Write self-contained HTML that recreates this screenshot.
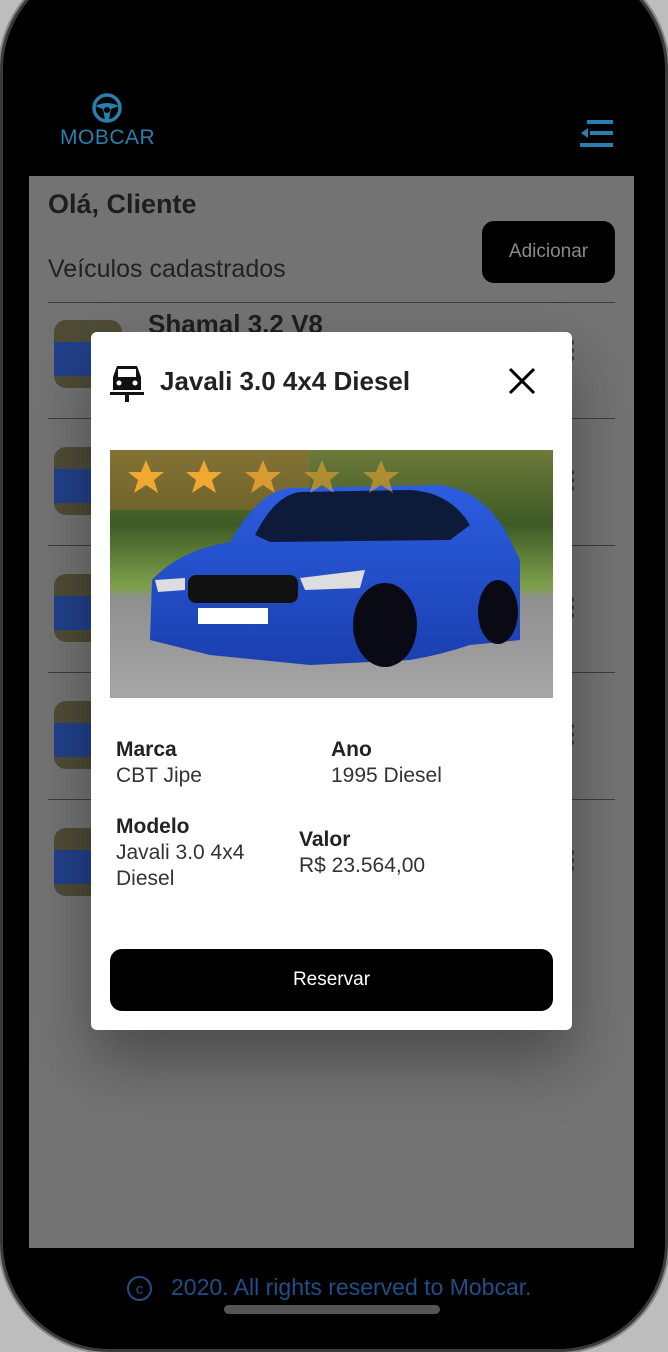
<!DOCTYPE html>
<html><head><meta charset="utf-8"><style>
*{margin:0;padding:0;box-sizing:border-box}
body{width:668px;height:1352px;background:#bdbdbd;position:relative;overflow:hidden;font-family:"Liberation Sans",sans-serif}
.phone{position:absolute;left:0;top:-40px;width:668px;height:1392px;background:#000;border-radius:110px;border:3px solid #3a3a3a;box-shadow:0 0 0 2px #888}
.screen{position:absolute;left:29px;top:176px;width:605px;height:1072px;background:#737373}
.abs{position:absolute;white-space:nowrap}
.thumb{position:absolute;left:54px;width:68px;height:68px;border-radius:12px;overflow:hidden;background:#4e4c36}
.thumb b{position:absolute;left:0;top:22px;width:68px;height:34px;background:#22408a}
.div{position:absolute;left:48px;width:567px;height:1px;background:#3c3c3c}
.dots{position:absolute;left:569px;width:6px}
.dots i{display:block;width:5px;height:5px;border-radius:50%;background:#3a3a3a;margin-bottom:3px}
.lbl{position:absolute;font-weight:bold;font-size:21px;color:#222}
.val{position:absolute;font-size:21px;color:#333;line-height:26px}
</style></head><body>
<div class="phone"></div>
<div class="abs" style="left:0;top:0;width:668px;height:1352px">
<svg class="abs" style="left:91px;top:92px" width="32" height="32" viewBox="0 0 32 32"><circle cx="16" cy="16" r="13" fill="none" stroke="#2a7fb0" stroke-width="3.5"/><path d="M4 14 Q16 8 28 14 L20 17 L18 28 L14 28 L12 17Z" fill="#2a7fb0"/><circle cx="16" cy="18" r="3" fill="#000"/></svg>
<div class="abs" style="left:60px;top:126px;font-size:21px;color:#2a7fb0;letter-spacing:0.5px">MOBCAR</div>
<svg class="abs" style="left:580px;top:119px" width="34" height="30"><rect x="7" y="1" width="26" height="4" fill="#2a7fb0"/><rect x="10" y="12" width="23" height="4" fill="#2a7fb0"/><rect x="0" y="24" width="33" height="4" fill="#2a7fb0"/><path d="M1 14 L8 9 L8 19Z" fill="#2a7fb0"/></svg>
<div class="screen"></div>
<div class="abs" style="left:48px;top:189px;font-size:27px;font-weight:bold;color:#1e1e1e">Olá, Cliente</div>
<div class="abs" style="left:48px;top:255px;font-size:25px;color:#222">Veículos cadastrados</div>
<div class="abs" style="left:482px;top:221px;width:133px;height:62px;background:#000;border-radius:12px;color:#8a8a8a;font-size:19px;text-align:center;line-height:62px">Adicionar</div>
<div class="div" style="top:302px"></div><div class="div" style="top:418px"></div><div class="div" style="top:545px"></div><div class="div" style="top:672px"></div><div class="div" style="top:799px"></div>
<div class="abs" style="left:148px;top:309px;font-size:26px;font-weight:bold;color:#1e1e1e">Shamal 3.2 V8</div>
<div class="thumb" style="top:320px"><b></b></div>
<div class="thumb" style="top:447px"><b></b></div>
<div class="thumb" style="top:574px"><b></b></div>
<div class="thumb" style="top:701px"><b></b></div>
<div class="thumb" style="top:828px"><b></b></div>
<div class="dots" style="top:340px"><i></i><i></i><i></i></div>
<div class="dots" style="top:470px"><i></i><i></i><i></i></div>
<div class="dots" style="top:597px"><i></i><i></i><i></i></div>
<div class="dots" style="top:724px"><i></i><i></i><i></i></div>
<div class="dots" style="top:850px"><i></i><i></i><i></i></div>
<div class="abs" style="left:91px;top:332px;width:481px;height:698px;background:#fff;border-radius:6px;box-shadow:0 30px 60px rgba(0,0,0,0.35)"></div>
<svg class="abs" style="left:110px;top:364px" width="34" height="38" viewBox="0 0 34 38"><path d="M7 2 H27 L31 13 V26 H3 V13Z" fill="#111"/><rect x="8" y="5" width="18" height="8" fill="#fff"/><circle cx="9" cy="19" r="2.5" fill="#fff"/><circle cx="25" cy="19" r="2.5" fill="#fff"/><rect x="0" y="28" width="34" height="3" fill="#111"/><rect x="15" y="31" width="4" height="7" fill="#111"/></svg>
<div class="abs" style="left:160px;top:366px;font-size:26px;font-weight:bold;color:#222">Javali 3.0 4x4 Diesel</div>
<svg class="abs" style="left:508px;top:367px" width="28" height="28"><path d="M2 2 L26 26 M26 2 L2 26" stroke="#000" stroke-width="3"/></svg>
<svg class="abs" style="left:110px;top:450px" width="443" height="248" viewBox="0 0 443 248">
<defs><linearGradient id="bg" x1="0" y1="0" x2="0" y2="1"><stop offset="0" stop-color="#6d7a3a"/><stop offset="0.3" stop-color="#3e5a26"/><stop offset="0.55" stop-color="#7ea04a"/><stop offset="0.6" stop-color="#8f8f8f"/><stop offset="1" stop-color="#a6a6a6"/></linearGradient>
<linearGradient id="car" x1="0" y1="0" x2="0" y2="1"><stop offset="0" stop-color="#2c5ee0"/><stop offset="1" stop-color="#1a3fb0"/></linearGradient></defs>
<rect width="443" height="248" fill="url(#bg)"/>
<rect x="0" y="0" width="200" height="60" fill="#9a6a30" opacity="0.5"/>
<path d="M40 190 L42 130 Q70 100 120 92 Q150 40 180 38 L330 35 Q370 40 395 80 L410 110 L410 190 L360 195 Q330 205 300 210 L200 215 L100 205Z" fill="url(#car)"/>
<path d="M145 85 Q165 45 190 42 L300 40 Q340 42 360 75 L340 90 L160 92Z" fill="#0d1a3a"/>
<rect x="78" y="125" width="110" height="28" rx="8" fill="#111"/>
<rect x="88" y="158" width="70" height="16" fill="#fff"/>
<ellipse cx="275" cy="175" rx="32" ry="42" fill="#0a0a14"/>
<ellipse cx="388" cy="162" rx="20" ry="32" fill="#0a0a14"/>
<path d="M45 130 L75 128 L75 140 L48 142Z" fill="#ddd"/><path d="M190 128 L255 120 L250 138 L195 140Z" fill="#ddd"/>
<g fill="#f0a830"><path d="M36 10 L41 22 L54 22 L44 30 L48 43 L36 35 L24 43 L28 30 L18 22 L31 22Z"/><path d="M94 10 L99 22 L112 22 L102 30 L106 43 L94 35 L82 43 L86 30 L76 22 L89 22Z"/><path d="M153 10 L158 22 L171 22 L161 30 L165 43 L153 35 L141 43 L145 30 L135 22 L148 22Z" opacity="0.8"/><path d="M212 10 L217 22 L230 22 L220 30 L224 43 L212 35 L200 43 L204 30 L194 22 L207 22Z" opacity="0.55"/><path d="M271 10 L276 22 L289 22 L279 30 L283 43 L271 35 L259 43 L263 30 L253 22 L266 22Z" opacity="0.55"/></g>
</svg>
<div class="lbl" style="left:116px;top:738px">Marca</div><div class="val" style="left:116px;top:763px">CBT Jipe</div>
<div class="lbl" style="left:331px;top:738px">Ano</div><div class="val" style="left:331px;top:763px">1995 Diesel</div>
<div class="lbl" style="left:116px;top:815px">Modelo</div><div class="val" style="left:116px;top:840px">Javali 3.0 4x4<br>Diesel</div>
<div class="lbl" style="left:299px;top:828px">Valor</div><div class="val" style="left:299px;top:853px">R$ 23.564,00</div>
<div class="abs" style="left:110px;top:949px;width:443px;height:62px;background:#000;border-radius:12px;color:#fff;font-size:19px;text-align:center;line-height:62px">Reservar</div>
<svg class="abs" style="left:126px;top:1275px" width="27" height="27"><circle cx="13.5" cy="13.5" r="11.5" fill="none" stroke="#1f4f86" stroke-width="2"/><text x="13.5" y="19" font-size="15" text-anchor="middle" fill="#1f4f86" font-family="Liberation Sans">c</text></svg>
<div class="abs" style="left:171px;top:1274px;font-size:23px;color:#1f4f86">2020. All rights reserved to Mobcar.</div>
<div class="abs" style="left:224px;top:1305px;width:216px;height:9px;border-radius:5px;background:#555"></div>
</div>
</body></html>
